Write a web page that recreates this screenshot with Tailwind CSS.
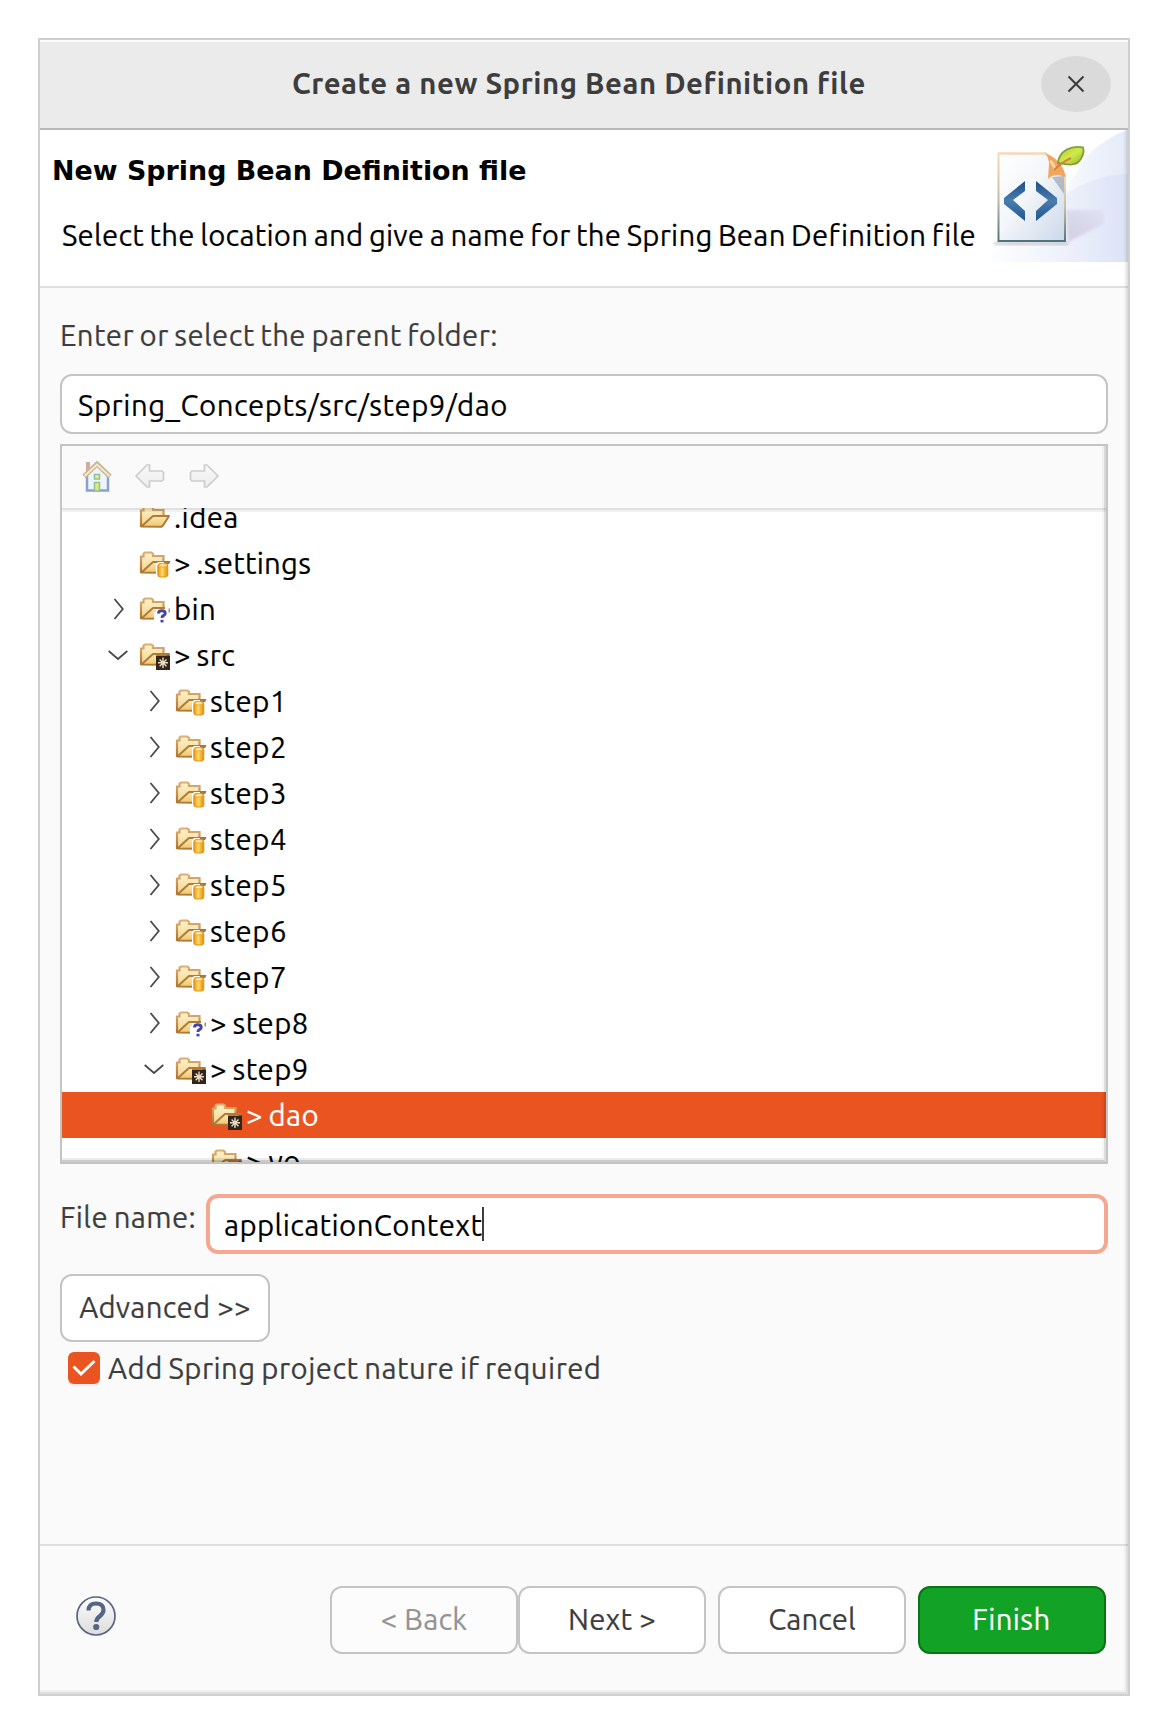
<!DOCTYPE html>
<html lang="en">
<head>
<meta charset="utf-8">
<title>Create a new Spring Bean Definition file</title>
<script src="https://cdn.jsdelivr.net/npm/@tailwindcss/browser@4"></script>
</head>
<body class="bg-white px-[38px] pt-[38px] font-['Ubuntu','Noto_Sans',sans-serif] text-[29.33px] leading-[46px] tracking-[0.4px] [word-spacing:-1.5px] text-[#3d3d3d] [-webkit-text-stroke:0.2px]">

<!-- Shared icons -->
<svg class="absolute size-0" aria-hidden="true">
  <defs>
    <linearGradient id="fb" x1="0" y1="0" x2="0" y2="1"><stop offset="0" stop-color="#fdf3cf"/><stop offset="1" stop-color="#f3d489"/></linearGradient>
    <linearGradient id="ff" x1="0" y1="0" x2="0" y2="1"><stop offset="0" stop-color="#fbe9b4"/><stop offset="1" stop-color="#f0c66b"/></linearGradient>
    <linearGradient id="cy" x1="0" y1="0" x2="1" y2="0"><stop offset="0" stop-color="#e8930c"/><stop offset=".45" stop-color="#ffd968"/><stop offset="1" stop-color="#e08a08"/></linearGradient>
    <linearGradient id="ar" x1="0" y1="0" x2="0" y2="1"><stop offset="0" stop-color="#fafafa"/><stop offset="1" stop-color="#ececec"/></linearGradient>
    <linearGradient id="fo" x1="0" y1="0" x2="0" y2="1"><stop offset="0" stop-color="#dfae72"/><stop offset="1" stop-color="#a9742c"/></linearGradient>
    <symbol id="folder" viewBox="0 0 32 32">
      <path d="M2 25V9.500H4.500V6.500L6 5.500H12.500L14 7V9H24.500V15" fill="url(#fb)"/>
      <path d="M2 26V9.500H4.500V6.500L6 5.500H12.500L14 7V9H24.500V15" fill="none" stroke="url(#fo)" stroke-width="2.200"/>
      <path d="M2.500 25.500 9 19.500 14 15H30L24 24.500 22.500 25.800Z" fill="url(#ff)" stroke="#b07a38" stroke-width="2" stroke-linejoin="round"/>
    </symbol>
    <symbol id="folder-repo" viewBox="0 0 32 32">
      <use href="#folder"/>
      <path d="M17 17 19 15H30V32H19L17 30Z" fill="#fff"/>
      <path d="M25 14H31.500L30 17H25Z" fill="#a97838"/>
      <rect x="18.800" y="16.500" width="10" height="13.500" rx="2.500" fill="url(#cy)" stroke="#e58f14" stroke-width="1"/>
      <ellipse cx="23.800" cy="18.300" rx="4" ry="1.700" fill="#ffe9a0" stroke="#e9a02a" stroke-width=".8"/>
    </symbol>
    <symbol id="folder-new" viewBox="0 0 32 32">
      <use href="#folder"/>
      <path d="M17 16H30V32H17Z" fill="#fff"/><path d="M15 19H18V27H15Z" fill="#fff"/><path d="M24 20H32V27H24Z" fill="#fff"/><path d="M26 13H32V17H26Z" fill="#fff"/>
      <path d="M29.500 15.500H31V19.500H29.500Z" fill="#b98a52"/>
      <path d="M19.500 20.500Q19.500 17.800 22.800 17.800 26.200 17.800 26.200 20.300 26.200 22 24 22.800 23 23.300 23 25" fill="none" stroke="#4343a8" stroke-width="2.900"/>
      <rect x="21.500" y="26.800" width="3" height="2.600" fill="#4343a8"/>
    </symbol>
    <symbol id="folder-dirty" viewBox="0 0 32 32">
      <use href="#folder"/>
      <rect x="17" y="16.500" width="14" height="14.500" fill="#33241a"/>
      <path d="M24 18.500V29M19 23.800H29M20.600 20.500 27.500 27.200M27.500 20.500 20.600 27.200" stroke="#e9dec4" stroke-width="1.400"/>
    </symbol>
    <symbol id="right" viewBox="0 0 20 32"><path d="M6.500 6 14.800 16 6.500 26" fill="none" stroke="#4a4a4a" stroke-width="1.800"/></symbol>
    <symbol id="down" viewBox="0 0 20 32"><path d="M.700 12 10 20 19.300 12" fill="none" stroke="#4a4a4a" stroke-width="1.800"/></symbol>
  </defs>
</svg>

<div class="relative flex h-[1658px] w-[1092px] flex-col border-2 border-[#cfcfcf] bg-[#fafafa]">

  <!-- Title bar -->
  <header class="mt-[2px] flex h-[88px] items-center border-b-2 border-[#b9b9b9] bg-[#ebebeb] pb-[2px]">
    <h1 class="ml-[252px] whitespace-nowrap font-bold tracking-[0.55px] [word-spacing:0px] [-webkit-text-stroke:0px]">Create a new Spring Bean Definition file</h1>
    <button class="ml-auto mr-[17px] flex h-14 w-[70px] items-center justify-center rounded-[50%] bg-[#dadada]">
      <svg class="size-5" viewBox="0 0 20 20"><path d="M2.500 2.500 17.500 17.500M17.500 2.500 2.500 17.500" stroke="#3d3d3d" stroke-width="2.100"/></svg>
    </button>
  </header>

  <!-- Wizard banner -->
  <section class="flex h-[158px] border-b-2 border-[#e0e0e0] bg-white text-black">
    <div class="flex-1 whitespace-nowrap">
      <h2 class="mt-[18px] ml-3 font-['DejaVu_Sans'] text-[26.9px] font-bold tracking-normal [word-spacing:0px] [-webkit-text-stroke:0px]">New Spring Bean Definition file</h2>
      <p class="mt-[19px] ml-[22px] tracking-[0.25px]">Select the location and give a name for the Spring Bean Definition file</p>
    </div>
    <svg class="h-[132px] w-[144px] shrink-0" viewBox="0 0 144 132">
      <defs>
        <linearGradient id="b1" x1="0" x2="1" y1="0" y2="0"><stop offset="0" stop-color="#fff"/><stop offset=".5" stop-color="#eff3fb"/><stop offset="1" stop-color="#dce3f6"/></linearGradient>
        <linearGradient id="b2" gradientUnits="userSpaceOnUse" x1="60" x2="144" y1="0" y2="0"><stop offset="0" stop-color="#fff"/><stop offset="1" stop-color="#e4eaf8"/></linearGradient>
        <linearGradient id="pg" x1="0" y1="0" x2="1" y2="1"><stop offset="0" stop-color="#fff"/><stop offset=".45" stop-color="#f3f6fa"/><stop offset="1" stop-color="#cbd8ea"/></linearGradient>
        <linearGradient id="po" x1="0" y1="0" x2="0" y2="1"><stop offset="0" stop-color="#f5dcbc"/><stop offset=".5" stop-color="#c2bfa8"/><stop offset="1" stop-color="#4f7479"/></linearGradient>
        <linearGradient id="br" x1="0" y1="0" x2="0" y2="1"><stop offset="0" stop-color="#1d5089"/><stop offset=".5" stop-color="#4a7cae"/><stop offset="1" stop-color="#1f5790"/></linearGradient>
        <linearGradient id="lf" x1="0" y1="0" x2="1" y2="1"><stop offset="0" stop-color="#a9c832"/><stop offset=".5" stop-color="#cfea4c"/><stop offset="1" stop-color="#93b82a"/></linearGradient>
        <linearGradient id="sh" x1="0" x2="1" y1="1" y2="0"><stop offset="0" stop-color="#c9c3d8"/><stop offset="1" stop-color="#dfe0f2"/></linearGradient>
        <filter id="soft"><feGaussianBlur stdDeviation="1.600"/></filter>
      </defs>
      <path d="M144 0Q133 3 123 10 112 17 106 23 97 33 93 42L83 57 60 132H144Z" fill="url(#b2)"/>
      <path d="M0 132 83 63Q98 54 113 49 128 44 144 44V132Z" fill="url(#b1)"/>
      <path d="M82 80 120 80 120 94 84 112Z" fill="url(#sh)" opacity=".75" filter="url(#soft)"/>
      <path d="M10 112H84V115H10Z" fill="#b9b4c4" opacity=".7" filter="url(#soft)"/>
      <path d="M15 24H62L81 46V111H15Z" fill="url(#pg)"/>
      <path d="M13.500 23H15.500V112H13.500Z" fill="url(#po)"/><path d="M80 44H82V112H80V44Z" fill="url(#po)"/>
      <path d="M14 23.500H63" stroke="#f3d9b9" stroke-width="2.500"/><path d="M14 111H82" stroke="#4f7479" stroke-width="2"/>
      <path d="M68 47 80 46V64Z" fill="#7f8894" opacity=".5"/>
      <path d="M61 23Q70 26 77 35 82 43 81 47 71 42 64 49L65 34Q65 28 61 23Z" fill="#f2a55e"/>
      <path d="M66 31Q70 34 71 40" fill="none" stroke="#fbd5a6" stroke-width="3"/>
      <path d="M74 33C75 21 87 15 99 17.500 101 22 97 33 90 34 84 36 79 33 74 33Z" fill="url(#lf)" stroke="#869c38" stroke-width="1.800"/>
      <path d="M70 40Q78 32 87 28" fill="none" stroke="#d98338" stroke-width="2.200"/>
      <path d="M41 51V61L29 70 41 81V91L20 74V68Z" fill="url(#br)"/>
      <path d="M52 51V61L64 70 52 81V91L73 74V68Z" fill="url(#br)"/>
    </svg>
  </section>

  <!-- Page body -->
  <main class="flex h-[1258px] flex-col border-b-2 border-[#dfdfdf] px-5">
    <label class="mt-[25px] whitespace-nowrap">Enter or select the parent folder:</label>
    <div class="mt-[15px] flex h-[60px] items-center rounded-xl border-2 border-[#c4c4c4] bg-white px-4 pt-[3px] text-black">
      <span class="whitespace-nowrap tracking-[0.53px]">Spring_Concepts/src/step9/dao</span>
    </div>

    <div class="relative mt-[10px] flex h-[720px] flex-col border-2 border-[#c4c4c4] bg-white">
      <div class="flex h-[62px] items-center bg-[#fafafa] pl-5">
        <svg class="size-8 opacity-60" viewBox="0 0 32 32">
          <path d="M4 1H8V12H4Z" fill="#b5795c"/>
          <path d="M4 15 15 4 26 15V30H4Z" fill="#e6f2fc"/>
          <path d="M5 15V29.500H26V15" fill="none" stroke="#3f68b0" stroke-width="2.500"/>
          <path d="M2 15.500 15 3 28 15.500" fill="none" stroke="#a98750" stroke-width="5"/>
          <path d="M2.500 15 15 3.500 27.500 15" fill="none" stroke="#f6dfb0" stroke-width="2"/>
          <rect x="12.500" y="13.500" width="5" height="4.500" fill="#dcec3c" stroke="#4b9a58" stroke-width="1.500"/>
          <rect x="12.500" y="21.500" width="5" height="8.500" fill="#c5e02e" stroke="#4b9a58" stroke-width="1.500"/>
        </svg>
        <svg class="ml-5 size-8" viewBox="0 0 32 32"><path d="M2 15 13 4H15.500V10H28L29.500 11.500V18.500L28 20H15.500V26H13Z" fill="url(#ar)" stroke="#cdcdcd" stroke-width="1.700"/></svg>
        <svg class="ml-[22px] size-8" viewBox="0 0 32 32"><path d="M30 15 19 4H16.500V10H4L2.500 11.500V18.500L4 20H16.500V26H19Z" fill="url(#ar)" stroke="#cdcdcd" stroke-width="1.700"/></svg>
      </div>

      <div class="relative min-h-0 flex-1 overflow-hidden whitespace-nowrap text-black">
        <div class="-mt-[14px] [&_span]:pt-[2px]">
          <div class="flex h-[46px] items-center pl-[77px]"><svg class="mr-[3px] size-8"><use href="#folder"/></svg><span>.idea</span></div>
          <div class="flex h-[46px] items-center pl-[77px]"><svg class="mr-[3px] size-8"><use href="#folder-repo"/></svg><span class="tracking-[0.25px]">&gt; .settings</span></div>
          <div class="flex h-[46px] items-center pl-[46px]"><svg class="mr-[11px] h-8 w-5"><use href="#right"/></svg><svg class="mr-[3px] size-8"><use href="#folder-new"/></svg><span>bin</span></div>
          <div class="flex h-[46px] items-center pl-[46px]"><svg class="mr-[11px] h-8 w-5"><use href="#down"/></svg><svg class="mr-[3px] size-8"><use href="#folder-dirty"/></svg><span>&gt; src</span></div>
          <div class="flex h-[46px] items-center pl-[82px] tracking-[0.6px]"><svg class="mr-[11px] h-8 w-5"><use href="#right"/></svg><svg class="mr-[3px] size-8"><use href="#folder-repo"/></svg><span>step1</span></div>
          <div class="flex h-[46px] items-center pl-[82px] tracking-[0.6px]"><svg class="mr-[11px] h-8 w-5"><use href="#right"/></svg><svg class="mr-[3px] size-8"><use href="#folder-repo"/></svg><span>step2</span></div>
          <div class="flex h-[46px] items-center pl-[82px] tracking-[0.6px]"><svg class="mr-[11px] h-8 w-5"><use href="#right"/></svg><svg class="mr-[3px] size-8"><use href="#folder-repo"/></svg><span>step3</span></div>
          <div class="flex h-[46px] items-center pl-[82px] tracking-[0.6px]"><svg class="mr-[11px] h-8 w-5"><use href="#right"/></svg><svg class="mr-[3px] size-8"><use href="#folder-repo"/></svg><span>step4</span></div>
          <div class="flex h-[46px] items-center pl-[82px] tracking-[0.6px]"><svg class="mr-[11px] h-8 w-5"><use href="#right"/></svg><svg class="mr-[3px] size-8"><use href="#folder-repo"/></svg><span>step5</span></div>
          <div class="flex h-[46px] items-center pl-[82px] tracking-[0.6px]"><svg class="mr-[11px] h-8 w-5"><use href="#right"/></svg><svg class="mr-[3px] size-8"><use href="#folder-repo"/></svg><span>step6</span></div>
          <div class="flex h-[46px] items-center pl-[82px] tracking-[0.6px]"><svg class="mr-[11px] h-8 w-5"><use href="#right"/></svg><svg class="mr-[3px] size-8"><use href="#folder-repo"/></svg><span>step7</span></div>
          <div class="flex h-[46px] items-center pl-[82px]"><svg class="mr-[11px] h-8 w-5"><use href="#right"/></svg><svg class="mr-[3px] size-8"><use href="#folder-new"/></svg><span>&gt; step8</span></div>
          <div class="flex h-[46px] items-center pl-[82px]"><svg class="mr-[11px] h-8 w-5"><use href="#down"/></svg><svg class="mr-[3px] size-8"><use href="#folder-dirty"/></svg><span>&gt; step9</span></div>
          <div class="flex h-[46px] items-center bg-[#e95420] pl-[149px] text-white"><svg class="mr-[3px] size-8"><use href="#folder-dirty"/></svg><span>&gt; dao</span></div>
          <div class="flex h-[46px] items-center pl-[149px]"><svg class="mr-[3px] size-8"><use href="#folder-dirty"/></svg><span>&gt; vo</span></div>
        </div>
        <div class="absolute inset-x-0 top-0 h-1 border-t-2 border-black/12 bg-black/5 bg-clip-padding"></div>
      </div>
      <!-- inner bevel -->
      <div class="absolute inset-0 border-r-2 border-r-black/13 border-b-2 border-b-black/20"></div>
      <div class="absolute inset-0 mr-[2px] mb-[2px] border-r-2 border-r-black/4 border-b-2 border-b-black/7"></div>
    </div>

    <div class="mt-[30px] flex h-[60px]">
      <label class="mt-px w-[146px] whitespace-nowrap">File name:</label>
      <div class="flex flex-1 items-center rounded-xl border-4 border-[#f5a78f] bg-white pl-[14px] text-black">
        <span class="whitespace-nowrap pt-[3px]">applicationContext</span><span class="h-[34px] w-[2px] bg-[#3d3d3d]"></span>
      </div>
    </div>

    <button class="mt-5 flex h-[68px] w-[210px] items-center justify-center whitespace-nowrap rounded-xl border-2 border-[#c4c4c4] bg-white tracking-[0.25px]">Advanced &gt;&gt;</button>
    <label class="mt-[2px] ml-2 flex items-center">
      <span class="flex size-8 items-center justify-center rounded-md bg-[#e95420] shadow-[0_2px_0_#ececec]">
        <svg class="size-8" viewBox="0 0 32 32"><path d="M5.500 14.500 13 22 26.500 9" fill="none" stroke="#fff" stroke-width="3"/></svg>
      </span>
      <span class="ml-2 whitespace-nowrap pt-[2px] tracking-[0.47px]">Add Spring project nature if required</span>
    </label>
  </main>

  <!-- Button bar -->
  <footer class="flex items-center pt-10 pr-[22px] pl-9">
    <svg class="-mt-2 h-10 w-10" viewBox="0 0 40 40">
      <defs><linearGradient id="hg" x1="0" y1="0" x2="0" y2="1"><stop offset="0" stop-color="#fdfdfd"/><stop offset="1" stop-color="#dcdcdc"/></linearGradient></defs>
      <circle cx="20" cy="20" r="19" fill="url(#hg)" stroke="#536685" stroke-width="1.700"/>
      <path d="M12.500 14.500Q12.500 7.500 20 7.500 27.500 7.500 27.500 14 27.500 17.500 23.500 20.500 20.300 22.800 20.300 26" fill="none" stroke="#536685" stroke-width="4.200"/>
      <circle cx="20.200" cy="31" r="3.100" fill="#536685"/>
    </svg>
    <div class="ml-auto flex">
      <button class="h-[68px] w-[188px] rounded-xl border-2 border-[#c4c4c4] bg-[#fcfcfc] tracking-[0.2px] text-[#939393]">&lt; Back</button>
      <button class="h-[68px] w-[188px] rounded-xl border-2 border-[#c4c4c4] bg-white tracking-[0.2px]">Next &gt;</button>
      <button class="ml-3 h-[68px] w-[188px] rounded-xl border-2 border-[#c4c4c4] bg-white tracking-normal">Cancel</button>
      <button class="ml-3 h-[68px] w-[188px] rounded-xl border-2 border-[#0c7218] bg-[#12a326] pr-px text-white">Finish</button>
    </div>
  </footer>

  <!-- window edge shading -->
  <div class="absolute inset-x-0 top-[90px] bottom-0 border-r-2 border-b-2 border-black/11"></div>
  <div class="absolute inset-x-0 top-[90px] bottom-[2px] mr-[2px] border-r-2 border-b-2 border-black/4"></div>
</div>
</body>
</html>
